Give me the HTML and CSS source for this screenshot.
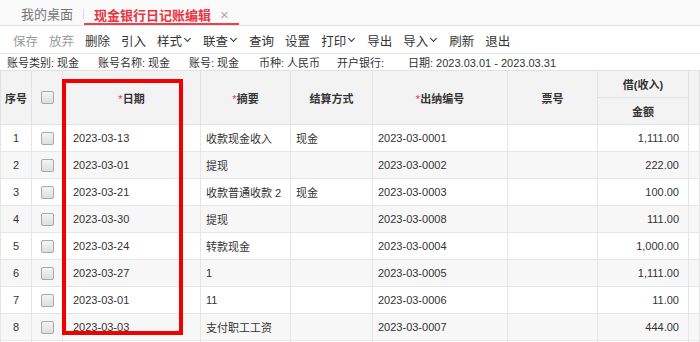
FILE: index.html
```html
<!DOCTYPE html>
<html>
<head>
    <title>现金银行日记账编辑</title>
    <meta charset="UTF-8">
    <link rel="stylesheet" href="styles.css">
</head>
<body>
    <div class="tab-bar">
        <div class="tab">我的桌面</div>
        <div class="tab-sep"></div>
        <div class="tab active">现金银行日记账编辑<span class="tab-close">×</span></div>
    </div>
    <div class="toolbar">
        <span class="tool disabled">保存</span>
        <span class="tool disabled">放弃</span>
        <span class="tool">删除</span>
        <span class="tool">引入</span>
        <span class="tool">样式<i class="caret"></i></span>
        <span class="tool">联查<i class="caret"></i></span>
        <span class="tool">查询</span>
        <span class="tool">设置</span>
        <span class="tool">打印<i class="caret"></i></span>
        <span class="tool">导出</span>
        <span class="tool">导入<i class="caret"></i></span>
        <span class="tool">刷新</span>
        <span class="tool">退出</span>
    </div>
    <div class="info-row">
        <span class="info w1">账号类别: 现金</span>
        <span class="info w1">账号名称: 现金</span>
        <span class="info w2">账号: 现金</span>
        <span class="info w3">币种: 人民币</span>
        <span class="info w4">开户银行:</span>
        <span class="info">日期: 2023.03.01 - 2023.03.31</span>
    </div>
    <div class="grid-wrap">
        <table class="grid">
            <colgroup>
                <col style="width:31px">
                <col style="width:31px">
                <col style="width:138px">
                <col style="width:90px">
                <col style="width:82px">
                <col style="width:135px">
                <col style="width:90px">
                <col style="width:91px">
                <col>
            </colgroup>
            <thead>
                <tr>
                    <th rowspan="2">序号</th>
                    <th rowspan="2"><span class="chk"></span></th>
                    <th rowspan="2"><em>*</em>日期</th>
                    <th rowspan="2"><em>*</em>摘要</th>
                    <th rowspan="2">结算方式</th>
                    <th rowspan="2"><em>*</em>出纳编号</th>
                    <th rowspan="2">票号</th>
                    <th class="sub">借(收入)</th>
                    <th rowspan="2"></th>
                </tr>
                <tr>
                    <th class="sub">金额</th>
                </tr>
            </thead>
            <tbody>
                <tr><td class="c">1</td><td class="c"><span class="chk"></span></td><td class="d">2023-03-13</td><td>收款现金收入</td><td>现金</td><td>2023-03-0001</td><td></td><td class="r">1,111.00</td><td></td></tr>
                <tr><td class="c">2</td><td class="c"><span class="chk"></span></td><td class="d">2023-03-01</td><td>提现</td><td></td><td>2023-03-0002</td><td></td><td class="r">222.00</td><td></td></tr>
                <tr><td class="c">3</td><td class="c"><span class="chk"></span></td><td class="d">2023-03-21</td><td>收款普通收款 2</td><td>现金</td><td>2023-03-0003</td><td></td><td class="r">100.00</td><td></td></tr>
                <tr><td class="c">4</td><td class="c"><span class="chk"></span></td><td class="d">2023-03-30</td><td>提现</td><td></td><td>2023-03-0008</td><td></td><td class="r">111.00</td><td></td></tr>
                <tr><td class="c">5</td><td class="c"><span class="chk"></span></td><td class="d">2023-03-24</td><td>转款现金</td><td></td><td>2023-03-0004</td><td></td><td class="r">1,000.00</td><td></td></tr>
                <tr><td class="c">6</td><td class="c"><span class="chk"></span></td><td class="d">2023-03-27</td><td>1</td><td></td><td>2023-03-0005</td><td></td><td class="r">1,111.00</td><td></td></tr>
                <tr><td class="c">7</td><td class="c"><span class="chk"></span></td><td class="d">2023-03-01</td><td>11</td><td></td><td>2023-03-0006</td><td></td><td class="r">11.00</td><td></td></tr>
                <tr><td class="c">8</td><td class="c"><span class="chk"></span></td><td class="d">2023-03-03</td><td>支付职工工资</td><td></td><td>2023-03-0007</td><td></td><td class="r">444.00</td><td></td></tr>
                <tr><td></td><td></td><td></td><td></td><td></td><td></td><td></td><td></td><td></td></tr>
            </tbody>
        </table>
        <div class="highlight-box"></div>
    </div>
</body>
</html>
```

FILE: styles.css
```css
body {
    margin: 0;
    width: 700px;
    height: 342px;
    overflow: hidden;
    background: #fff;
    font-family: "Liberation Sans", Arial, "Noto Sans CJK SC", sans-serif;
    color: #333;
}

/* tabs */
.tab-bar {
    height: 26px;
    border-bottom: 1px solid #e4e4e4;
    background: #fafafa;
    display: flex;
    align-items: stretch;
    box-sizing: border-box;
    padding-left: 21px;
}

.tab {
    font-size: 13px;
    color: #777;
    line-height: 18px;
    padding-top: 6px;
}

.tab-sep {
    width: 1px;
    background: #ddd;
    margin: 9px 0 6px 10px;
}

.tab.active {
    color: #e8343f;
    font-weight: bold;
    padding: 6px 10px 0 10px;
    border-bottom: 2px solid #ef3d4a;
    line-height: 17px;
    box-sizing: border-box;
}

.tab-close {
    font-weight: normal;
    color: #aaa;
    font-size: 15px;
    margin-left: 9px;
}

/* toolbar */
.toolbar {
    height: 27px;
    border-bottom: 1px solid #e4e4e4;
    display: flex;
    align-items: center;
    padding-left: 13px;
    gap: 11px;
    font-size: 12.5px;
}

.tool {
    display: flex;
    align-items: center;
    color: #333;
    padding-top: 1px;
}

.tool.disabled {
    color: #999;
}

.caret {
    width: 4px;
    height: 4px;
    border-right: 1.5px solid #333;
    border-bottom: 1.5px solid #333;
    transform: rotate(45deg);
    margin: -3px 2px 0 3px;
}

/* info row */
.info-row {
    height: 16px;
    display: flex;
    align-items: center;
    padding-left: 7px;
    font-size: 11px;
    color: #333;
}

.info.w1 { width: 91px; }
.info.w2 { width: 70px; }
.info.w3 { width: 78px; }
.info.w4 { width: 71px; }

/* grid */
.grid-wrap {
    position: relative;
}

.grid {
    width: 700px;
    table-layout: fixed;
    border-collapse: collapse;
    font-size: 11px;
    border-top: 1px solid #ddd;
}

.grid th {
    background: #f3f3f3;
    font-weight: bold;
    color: #333;
    border: 1px solid #e2e2e2;
    height: 53px;
    padding: 0;
    text-align: center;
}

.grid th.sub {
    height: 26px;
}

.grid th em {
    color: #e8343f;
    font-style: normal;
    font-weight: normal;
}

.grid td {
    height: 26px;
    border: 1px solid #e6e6e6;
    padding: 0 5px;
    white-space: nowrap;
    color: #333;
}

.grid tbody tr:nth-child(even) td {
    background: #f7f7f7;
}

.grid td.c {
    text-align: center;
    padding: 0;
}

.grid td.d {
    padding-left: 10px;
}

.grid td.r {
    text-align: right;
    padding-right: 9px;
}

.chk {
    display: inline-block;
    width: 11px;
    height: 11px;
    border: 1px solid #a8a8a8;
    border-radius: 2px;
    background: linear-gradient(#f4f4f4, #dedede);
    vertical-align: middle;
}

.highlight-box {
    position: absolute;
    left: 62px;
    top: 9px;
    width: 121px;
    height: 256px;
    border: 4px solid #f20000;
    box-sizing: border-box;
}
```
